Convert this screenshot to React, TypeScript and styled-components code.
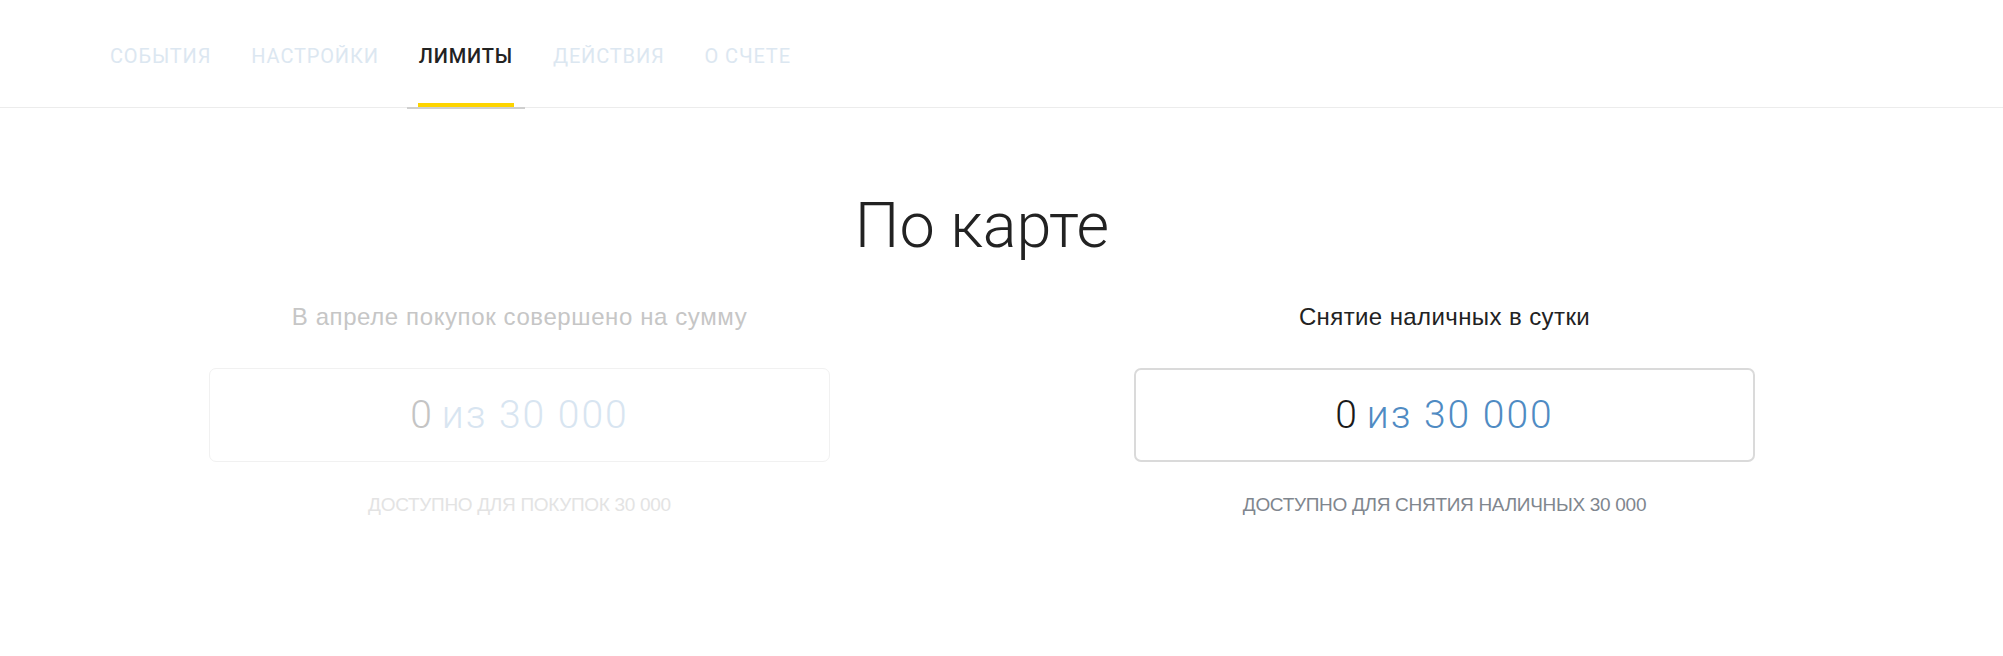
import React from "react";
import styled, { createGlobalStyle } from "styled-components";

const Global = createGlobalStyle`
  html, body { margin: 0; padding: 0; background: #ffffff; }
  body { font-family: "Liberation Sans", Arial, sans-serif; color: #222; }
`;

const Page = styled.div`
  width: 2003px;
  min-height: 656px;
  background: #fff;
`;

const Nav = styled.nav`
  height: 107px;
  border-bottom: 1px solid #ececec;
  display: flex;
  align-items: stretch;
  gap: 40px;
  padding-left: 110px;
`;

const Tab = styled.div<{ $active?: boolean }>`
  position: relative;
  display: flex;
  align-items: center;
  padding-top: 4px;
  font-family: Roboto, "Liberation Sans", sans-serif;
  font-size: 20px;
  font-weight: ${(p) => (p.$active ? 500 : 400)};
  letter-spacing: 0.85px;
  text-transform: uppercase;
  color: ${(p) => (p.$active ? "#222" : "#dce7f1")};
  &::before {
    content: "";
    display: ${(p) => (p.$active ? "block" : "none")};
    position: absolute;
    left: -12px;
    right: -12px;
    bottom: -2px;
    height: 2px;
    background: #cfcfcf;
  }
  &::after {
    content: "";
    display: ${(p) => (p.$active ? "block" : "none")};
    position: absolute;
    left: -1px;
    right: -1px;
    bottom: 0;
    height: 4px;
    background: #fdd400;
  }
`;

const Main = styled.main`
  width: 1850px;
  margin-left: 57px;
  display: flex;
  flex-direction: column;
  align-items: center;
`;

const Title = styled.h1`
  margin: 80px 0 0;
  font-family: Roboto, "Liberation Sans", sans-serif;
  font-weight: 300;
  font-size: 63px;
  line-height: 76px;
  color: #222;
`;

const Columns = styled.div`
  width: 100%;
  display: grid;
  grid-template-columns: 1fr 1fr;
  margin-top: 39px;
`;

const Column = styled.section`
  display: flex;
  flex-direction: column;
  align-items: center;
`;

const Label = styled.div<{ $muted?: boolean }>`
  font-size: 24px;
  line-height: 28px;
  letter-spacing: ${(p) => (p.$muted ? "0.6px" : "0.4px")};
  color: ${(p) => (p.$muted ? "#c6c6c6" : "#222")};
`;

const Box = styled.div<{ $muted?: boolean }>`
  margin-top: 37px;
  width: 621px;
  height: 94px;
  box-sizing: border-box;
  border: ${(p) => (p.$muted ? "1px solid #f1f1f1" : "2px solid #dadada")};
  border-radius: 7px;
  display: flex;
  align-items: center;
  justify-content: center;
  font-family: Roboto, "Liberation Sans", sans-serif;
  font-weight: 300;
  font-size: 39px;
  letter-spacing: 2px;
`;

const Used = styled.span<{ $muted?: boolean }>`
  color: ${(p) => (p.$muted ? "#c4c4c4" : "#1a1a1a")};
  margin-right: 0.2em;
`;

const Total = styled.span<{ $muted?: boolean }>`
  color: ${(p) => (p.$muted ? "#d8e5f1" : "#4f8bc3")};
`;

const Note = styled.div<{ $muted?: boolean }>`
  margin-top: 32px;
  font-size: 19px;
  line-height: 22px;
  text-transform: uppercase;
  letter-spacing: -0.3px;
  color: ${(p) => (p.$muted ? "#e3e3e3" : "#80868e")};
`;

type LimitProps = {
  label: string;
  used: string;
  total: string;
  note: string;
  muted?: boolean;
};

const Limit: React.FC<LimitProps> = ({ label, used, total, note, muted }) => (
  <Column>
    <Label $muted={muted}>{label}</Label>
    <Box $muted={muted}>
      <Used $muted={muted}>{used}</Used>
      <Total $muted={muted}>{total}</Total>
    </Box>
    <Note $muted={muted}>{note}</Note>
  </Column>
);

const tabs = ["События", "Настройки", "Лимиты", "Действия", "О счете"];

export default function App() {
  return (
    <Page>
      <Global />
      <Nav>
        {tabs.map((t) => (
          <Tab key={t} $active={t === "Лимиты"}>
            {t}
          </Tab>
        ))}
      </Nav>
      <Main>
        <Title>По карте</Title>
        <Columns>
          <Limit
            muted
            label="В апреле покупок совершено на сумму"
            used="0"
            total="из 30 000"
            note="Доступно для покупок 30 000"
          />
          <Limit
            label="Снятие наличных в сутки"
            used="0"
            total="из 30 000"
            note="Доступно для снятия наличных 30 000"
          />
        </Columns>
      </Main>
    </Page>
  );
}
